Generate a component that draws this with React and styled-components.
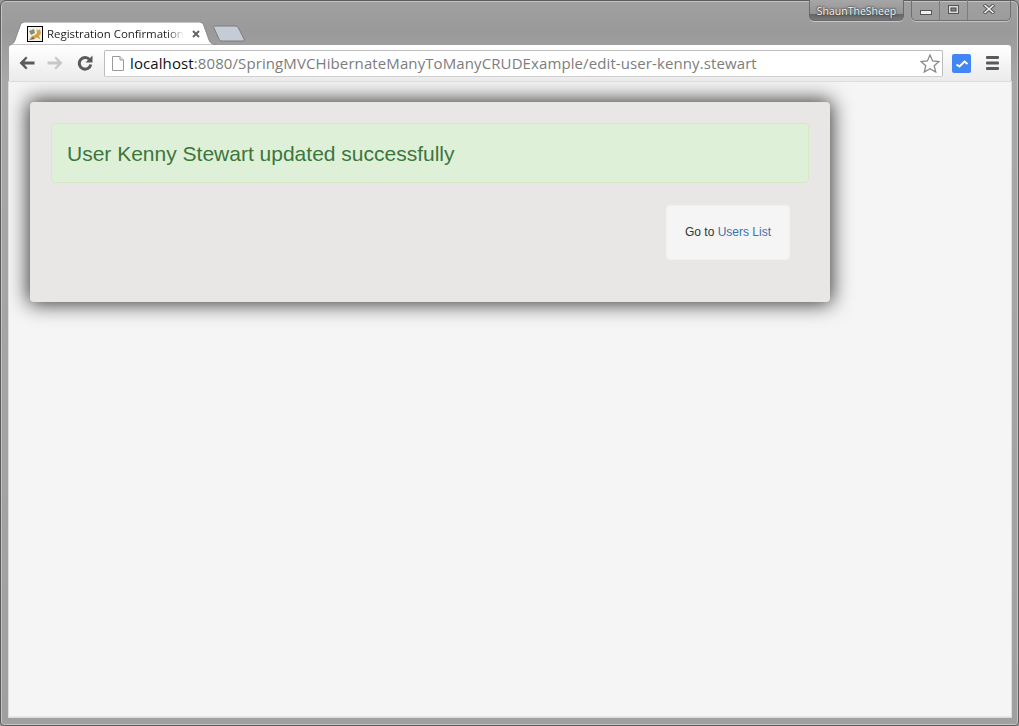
import React from 'react'
import styled, { createGlobalStyle } from 'styled-components'

const GlobalStyle = createGlobalStyle`
  html, body {
    margin: 0;
    padding: 0;
    background: #9a9a9a;
  }
  #root {
    width: 1019px;
    height: 726px;
    overflow: hidden;
  }
`

const Frame = styled.div`
  box-sizing: border-box;
  width: 1019px;
  height: 726px;
  display: flex;
  flex-direction: column;
  padding: 0 7px 8px 8px;
  background: linear-gradient(to bottom, #a0a0a0 0, #9a9a9a 30px, #a8a8a8 80px, #a0a0a0 100%);
  border: 1px solid #5c5c5c;
  border-radius: 6px 6px 4px 4px;
  box-shadow: inset 0 0 0 1px #c4c4c4;
`

const TitleRow = styled.div`
  display: flex;
  justify-content: flex-end;
  align-items: flex-start;
  gap: 7px;
  height: 21px;
  flex: none;
`

const ProfileButton = styled.div`
  box-sizing: border-box;
  width: 95px;
  height: 21px;
  margin-top: -1px;
  padding-top: 2px;
  display: flex;
  align-items: center;
  justify-content: center;
  border: 1px solid #6a6a6a;
  border-top: none;
  border-radius: 0 0 5px 5px;
  background: linear-gradient(to bottom, #a6a6a6 0, #949494 68%, #666666 72%, #787878 100%);
  box-shadow: 0 1px 0 #c8c8c8;
  color: #f6f6f6;
  font: 10.5px "Open Sans", sans-serif;
  text-shadow: 0 0 2px #333, 0 0 2px #333;
`

const Controls = styled.div`
  box-sizing: border-box;
  width: 100px;
  height: 21px;
  margin-top: -1px;
  display: flex;
  border: 1px solid #707070;
  border-top: none;
  border-radius: 0 0 5px 5px;
  box-shadow: 0 1px 0 #c4c4c4;
`

const ControlButton = styled.div`
  width: ${p => p.$width}px;
  box-sizing: border-box;
  padding-bottom: 2px;
  display: flex;
  align-items: center;
  justify-content: center;
  border-left: ${p => (p.$first ? 'none' : '1px solid #7c7c7c')};
  flex: none;
`

const TabStrip = styled.div`
  display: flex;
  align-items: flex-end;
  height: 23px;
  flex: none;
  padding-left: 0;
`

const Tab = styled.div`
  position: relative;
  width: 207px;
  height: 23px;
  display: flex;
  align-items: center;
  padding: 0 0 0 18px;
  box-sizing: border-box;
  flex: none;
`

const TabShape = styled.svg`
  position: absolute;
  inset: 0;
`

const Favicon = styled.svg`
  position: relative;
  flex: none;
`

const TabTitle = styled.div`
  position: relative;
  width: 137px;
  margin-left: 4px;
  white-space: nowrap;
  overflow: hidden;
  font: 11.5px "Open Sans", sans-serif;
  letter-spacing: -0.05px;
  color: #1e1e1e;
  -webkit-mask-image: linear-gradient(to right, #000 88%, transparent 100%);
  mask-image: linear-gradient(to right, #000 88%, transparent 100%);
`

const TabClose = styled.svg`
  position: relative;
  margin-left: 8px;
  flex: none;
`

const NewTab = styled.svg`
  margin: 0 0 3px -3px;
  flex: none;
`

const Toolbar = styled.div`
  box-sizing: border-box;
  height: 37px;
  flex: none;
  display: flex;
  align-items: center;
  padding: 0 10px 0 10px;
  background: linear-gradient(to bottom, #ffffff 0, #f5f5f5 50%, #ebebeb 100%);
  border-bottom: 1px solid #a8a8a8;
  border-radius: 3px 3px 0 0;
`

const NavIcon = styled.svg`
  flex: none;
  margin-right: ${p => p.$gap}px;
`

const Omnibox = styled.div`
  box-sizing: border-box;
  width: 839px;
  height: 27px;
  flex: none;
  display: flex;
  align-items: center;
  padding: 0 0 0 7px;
  margin-left: 1px;
  background: #fff;
  border: 1px solid #bdbdbd;
  border-bottom-color: #d0d0d0;
  border-radius: 2px;
  font: 15px "Open Sans", sans-serif;
  letter-spacing: 0.1px;
  color: #7d7d7d;
  white-space: nowrap;
`

const Host = styled.span`
  color: #111;
`

const UrlText = styled.div`
  flex: 1;
  margin-left: 6px;
`

const ExtensionIcon = styled.svg`
  flex: none;
  margin-left: 9px;
`

const MenuIcon = styled.svg`
  flex: none;
  margin-left: 15px;
`

const Page = styled.main`
  flex: 1;
  box-sizing: border-box;
  background: #f5f5f5;
  padding: 20px 0 0 21px;
  border-bottom: 1px solid #e8e8e8;
  box-shadow: 0 0 0 1px #dcdcdc;
  overflow: hidden;
`

const Card = styled.div`
  box-sizing: border-box;
  width: 800px;
  height: 200px;
  padding: 21px 21px 0;
  background: #e8e7e6;
  border-radius: 4px;
  box-shadow: 0 0 20px 2px #383838;
`

const Alert = styled.div`
  box-sizing: border-box;
  height: 60px;
  display: flex;
  align-items: center;
  padding: 2px 15px 0;
  background: #dff0d8;
  border: 1px solid #d6e9c6;
  border-radius: 4px;
  color: #3c763d;
  font: 21px "Liberation Sans", Arial, sans-serif;
`

const Actions = styled.div`
  display: flex;
  justify-content: flex-end;
  padding: 22px 19px 0 0;
`

const Well = styled.div`
  box-sizing: border-box;
  width: 124px;
  height: 55px;
  padding-bottom: 1px;
  display: flex;
  align-items: center;
  justify-content: center;
  background: #f5f5f5;
  border: 1px solid #f1f1f1;
  border-radius: 4px;
  color: #333;
  font: 12px "Liberation Sans", Arial, sans-serif;
  white-space: pre;
`

const UsersLink = styled.a`
  color: #3b73af;
  text-decoration: none;
`

export default function App() {
  return (
    <>
      <GlobalStyle />
      <Frame>
        <TitleRow>
          <ProfileButton>ShaunTheSheep</ProfileButton>
          <Controls>
            <ControlButton $width={27} $first>
              <svg width="12" height="5" viewBox="0 0 12 5" style={{ marginTop: 7 }}>
                <rect x="0.5" y="0.5" width="11" height="4" fill="#f0f0f0" stroke="#555" />
              </svg>
            </ControlButton>
            <ControlButton $width={28}>
              <svg width="11" height="9" viewBox="0 0 11 9">
                <rect x="0.5" y="0.5" width="10" height="8" fill="#dcdcdc" stroke="#555" />
                <rect x="3" y="3" width="5" height="3" fill="#888" stroke="#444" strokeWidth="1" />
              </svg>
            </ControlButton>
            <ControlButton $width={43}>
              <svg width="12" height="10" viewBox="0 0 12 10">
                <path d="M1 0.5 L11 9.5 M11 0.5 L1 9.5" stroke="#555" strokeWidth="3.4" />
                <path d="M1.5 1 L10.5 9 M10.5 1 L1.5 9" stroke="#f2f2f2" strokeWidth="1.6" />
              </svg>
            </ControlButton>
          </Controls>
        </TitleRow>
        <TabStrip>
          <Tab>
            <TabShape width="207" height="23" viewBox="0 0 207 23">
              <path d="M0 23 L0 23 C4 22 5 21 6 18 L11 4 C12 1 13 0 16 0 L190 0 C193 0 194 1 195 4 L200 18 C201 21 203 22 207 23 Z" fill="#fff" stroke="#8a8a8a" />
            </TabShape>
            <Favicon width="16" height="16" viewBox="0 0 16 16">
              <rect x="0.5" y="0.5" width="15" height="15" fill="#f4f1e8" stroke="#000" />
              <path d="M2 13 L5 10 L8 9 L10 7 L9.500 3 L11.500 4.500 L13 3 L14 7.500 L12 10 L13.500 13.500 L10 11.500 L7 12.500 L4 12 Z" fill="#d8a038" />
              <path d="M2 5 L7 3 L8 7 L4 9 Z" fill="#8c8c76" />
              <path d="M2 14 L6 11 L8 13 Z" fill="#6b6b4c" />
            </Favicon>
            <TabTitle>Registration Confirmation</TabTitle>
            <TabClose width="8" height="8" viewBox="0 0 8 8">
              <path d="M1 1 L7 7 M7 1 L1 7" stroke="#666" strokeWidth="2" />
            </TabClose>
          </Tab>
          <NewTab width="33" height="17" viewBox="0 0 33 17">
            <path d="M1.5 1 L22 1 C24 1 25 2 26 4 L31 14 C31.500 15 31 16 30 16 L9 16 C7 16 6.500 15 6 14 L1 3 C0.500 2 0.500 1 1.500 1 Z" fill="#c6ccd6" stroke="#7c7c7c" />
          </NewTab>
        </TabStrip>
        <Toolbar>
          <NavIcon width="16" height="14" viewBox="0 0 16 14" $gap={12}>
            <path d="M7 0.500 L0.500 7 L7 13.500 L8.500 12 L5.500 8.500 L15.500 8.500 L15.500 5.500 L5.500 5.500 L8.500 2 Z" fill="#5a5a5a" />
          </NavIcon>
          <NavIcon width="16" height="14" viewBox="0 0 16 14" $gap={14}>
            <path d="M9 0.500 L15.500 7 L9 13.500 L7.500 12 L10.500 8.500 L0.500 8.500 L0.500 5.500 L10.500 5.500 L7.500 2 Z" fill="#c8c8c8" />
          </NavIcon>
          <NavIcon width="16" height="16" viewBox="0 0 16 16" $gap={10}>
            <path d="M12.500 4.500 A5.800 5.800 0 1 0 13.800 9.500" fill="none" stroke="#5a5a5a" strokeWidth="3" />
            <path d="M15.500 0.500 L15.500 7.500 L8.500 7.500 Z" fill="#5a5a5a" />
          </NavIcon>
          <Omnibox>
            <svg width="12" height="15" viewBox="0 0 12 15">
              <path d="M0.500 0.500 L8 0.500 L11.500 4 L11.500 14.500 L0.500 14.500 Z" fill="#fff" stroke="#9a9a9a" />
              <path d="M8 0.500 L8 4 L11.500 4" fill="#e8e8e8" stroke="#9a9a9a" />
            </svg>
            <UrlText>
              <Host>localhost</Host>:8080/SpringMVCHibernateManyToManyCRUDExample/edit-user-kenny.stewart
            </UrlText>
            <svg width="20" height="19" viewBox="0 0 20 19" style={{ marginRight: 2 }}>
              <path d="M10 1 L12.600 7 L19 7.500 L14.200 11.700 L15.700 18 L10 14.700 L4.300 18 L5.800 11.700 L1 7.500 L7.400 7 Z" fill="#fff" stroke="#8a8a8a" strokeWidth="1.300" />
            </svg>
          </Omnibox>
          <ExtensionIcon width="19" height="19" viewBox="0 0 19 19">
            <rect width="19" height="19" rx="2" fill="#4285f4" />
            <path d="M4.500 10.500 L7.500 12.500 L12.500 7.500 L15.500 10" fill="none" stroke="#fff" strokeWidth="2" />
          </ExtensionIcon>
          <MenuIcon width="13" height="15" viewBox="0 0 13 15">
            <rect y="0" width="13" height="3" rx="1" fill="#5a5a5a" />
            <rect y="5.500" width="13" height="3" rx="1" fill="#5a5a5a" />
            <rect y="11" width="13" height="3" rx="1" fill="#5a5a5a" />
          </MenuIcon>
        </Toolbar>
        <Page>
          <Card>
            <Alert>User Kenny Stewart updated successfully</Alert>
            <Actions>
              <Well>
                Go to <UsersLink href="#">Users List</UsersLink>
              </Well>
            </Actions>
          </Card>
        </Page>
      </Frame>
    </>
  )
}
